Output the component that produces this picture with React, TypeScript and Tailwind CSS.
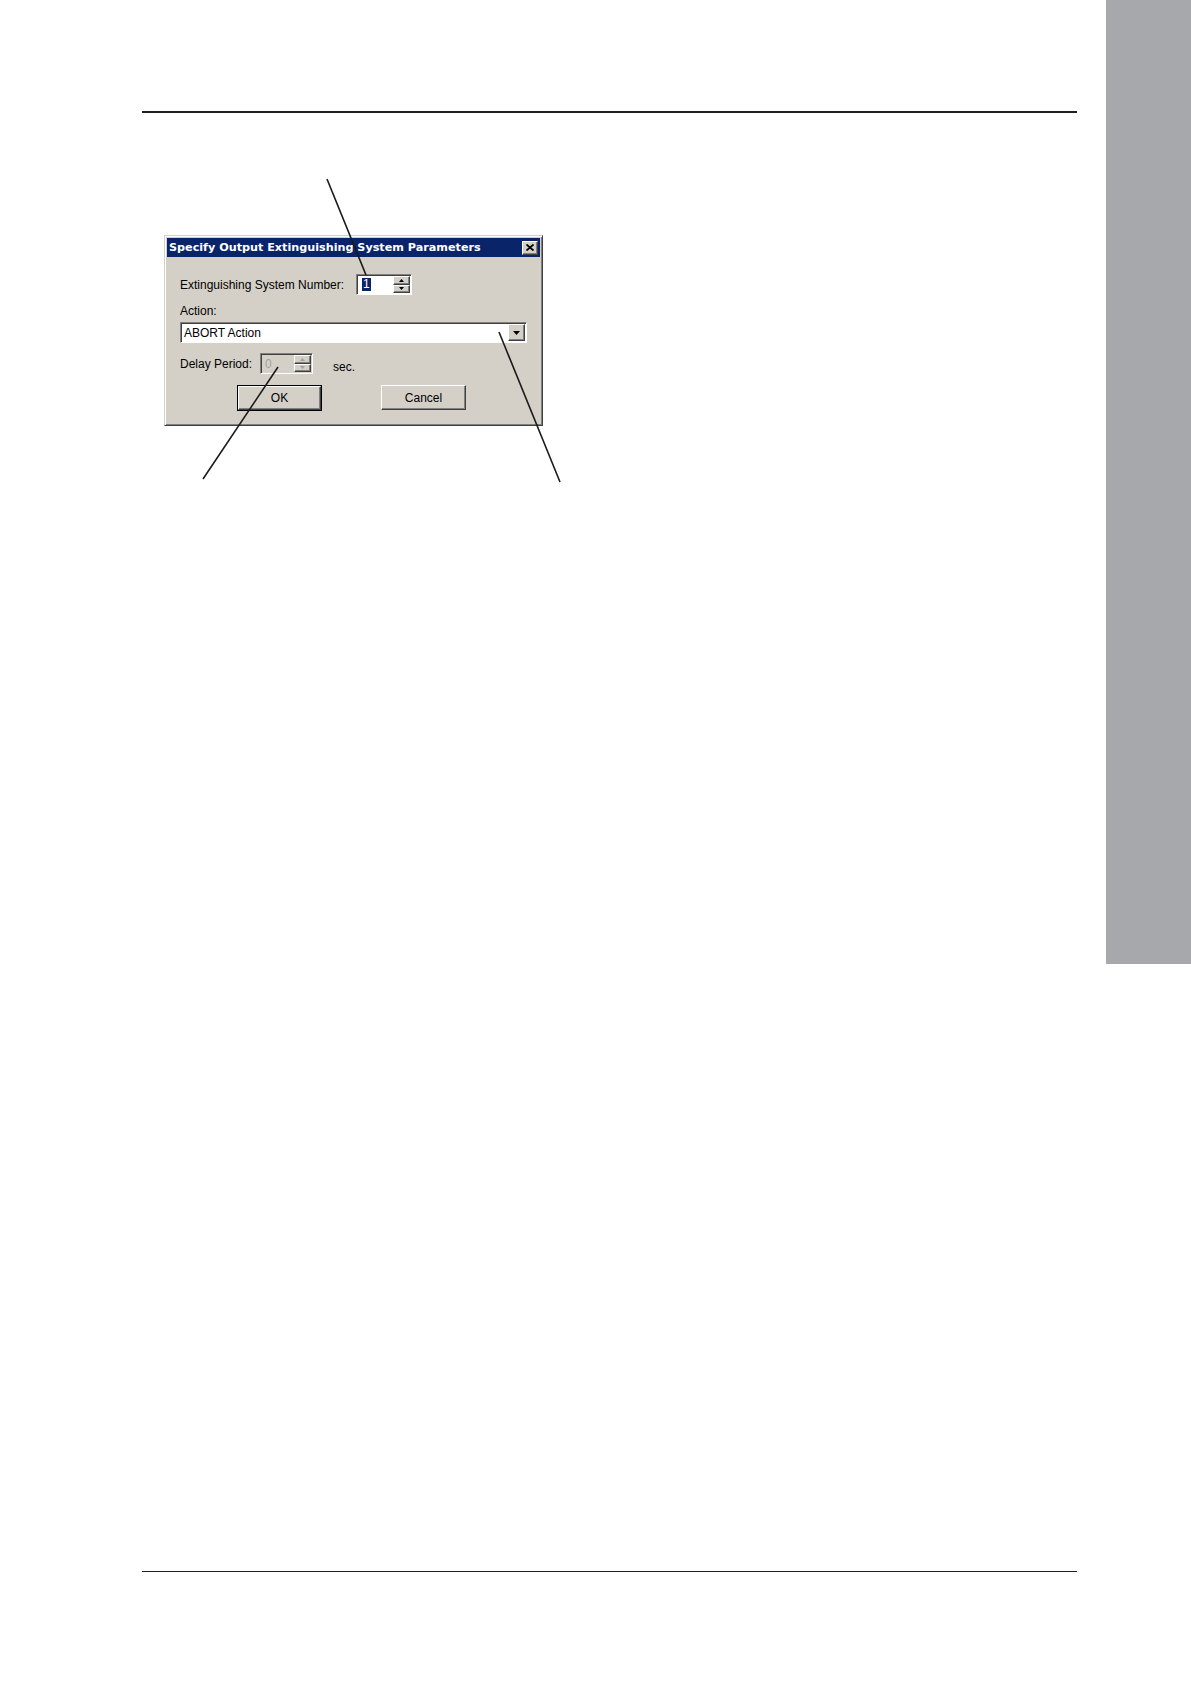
import React from "react";

const raised =
  "border border-t-[#ffffff] border-l-[#ffffff] border-r-[#404040] border-b-[#404040] shadow-[inset_-1px_-1px_0_#808080]";
const sunken =
  "border border-t-[#808080] border-l-[#808080] border-r-[#ffffff] border-b-[#ffffff] shadow-[inset_1px_1px_0_#404040]";

function SpinButtons({ disabled }: { disabled?: boolean }) {
  const c = disabled ? "#a0a0a0" : "#000000";
  return (
    <div className="flex flex-col w-[17px] h-full">
      <div className={`flex-1 bg-[#d4d0c8] ${raised} flex items-center justify-center`}>
        <svg width="5" height="3" viewBox="0 0 5 3">
          <path d="M2.5 0 L5 3 L0 3 Z" fill={c} />
        </svg>
      </div>
      <div className={`flex-1 bg-[#d4d0c8] ${raised} flex items-center justify-center`}>
        <svg width="5" height="3" viewBox="0 0 5 3">
          <path d="M0 0 L5 0 L2.5 3 Z" fill={c} />
        </svg>
      </div>
    </div>
  );
}

export default function App() {
  return (
    <div
      className="relative w-[1191px] h-[1684px] bg-white overflow-hidden flex"
      style={{ fontFamily: '"Liberation Sans", Arial, sans-serif' }}
    >
      <div className="w-[1106px] h-full flex flex-col">
        <div className="mt-[111px] ml-[142px] w-[935px] h-[2px] bg-[#231f20]" />

        {/* Dialog */}
        <div
          className={`mt-[122px] ml-[164px] w-[379px] h-[191px] p-[2px] bg-[#d4d0c8] border border-t-[#d4d0c8] border-l-[#d4d0c8] border-r-[#404040] border-b-[#404040] shadow-[inset_1px_1px_0_#ffffff,inset_-1px_-1px_0_#808080] flex flex-col text-[12px] text-black`}
        >
          <div className="h-[19px] bg-[#0a246a] flex items-center justify-between pl-[2px] pr-[2px]">
            <span
              className="text-white font-bold text-[11.2px] leading-none"
              style={{ fontFamily: '"DejaVu Sans", Verdana, sans-serif' }}
            >
              Specify Output Extinguishing System Parameters
            </span>
            <div className={`w-[16px] h-[14px] bg-[#d4d0c8] ${raised} flex items-center justify-center`}>
              <svg width="8" height="7" viewBox="0 0 8 7">
                <path d="M0.5 0.5 L7.5 6.5 M7.5 0.5 L0.5 6.5" stroke="#000" strokeWidth="1.8" />
              </svg>
            </div>
          </div>

          <div className="pl-[13px] flex flex-col">
            {/* Row 1 */}
            <div className="mt-[17px] flex items-center h-[21px]">
              <span className="w-[176px] leading-none">Extinguishing System Number:</span>
              <div className={`w-[56px] h-[21px] bg-white ${sunken} flex items-stretch p-[1px]`}>
                <div className="flex-1 flex items-center pl-[4px]">
                  <span className="bg-[#0a246a] text-white leading-[13px] px-[1px]">1</span>
                </div>
                <SpinButtons />
              </div>
            </div>

            {/* Action label */}
            <div className="mt-[9px] h-[15px] leading-[15px]">Action:</div>

            {/* Combo */}
            <div className={`mt-[3px] w-[347px] h-[21px] bg-white ${sunken} flex items-stretch p-[1px]`}>
              <div className="flex-1 flex items-center pl-[2px] leading-none">ABORT Action</div>
              <div className={`w-[17px] bg-[#d4d0c8] ${raised} flex items-center justify-center`}>
                <svg width="7" height="4" viewBox="0 0 7 4">
                  <path d="M0 0 L7 0 L3.5 4 Z" fill="#000" />
                </svg>
              </div>
            </div>

            {/* Row 3 */}
            <div className="mt-[10px] flex items-center h-[21px]">
              <span className="w-[80px] leading-none">Delay Period:</span>
              <div className={`w-[53px] h-[21px] bg-[#d4d0c8] ${sunken} flex items-stretch p-[1px]`}>
                <div className="flex-1 flex items-center pl-[3px] text-[#a0a0a0] leading-none">0</div>
                <SpinButtons disabled />
              </div>
              <span className="ml-[20px] mt-[6px] leading-none">sec.</span>
            </div>

            {/* Buttons */}
            <div className="mt-[11px] flex items-start">
              <div className="ml-[57px] w-[85px] h-[26px] border border-black">
                <div className={`w-full h-full bg-[#d4d0c8] ${raised} flex items-center justify-center leading-none`}>
                  OK
                </div>
              </div>
              <div className={`ml-[59px] w-[85px] h-[25px] bg-[#d4d0c8] ${raised} flex items-center justify-center leading-none`}>
                Cancel
              </div>
            </div>
          </div>
        </div>

        <div className="flex-1" />
        <div className="ml-[142px] w-[935px] h-[1.5px] bg-[#231f20]" />
        <div className="h-[112px]" />
      </div>

      <div className="w-[85px] h-[964px] bg-[#a7a8ab]" />

      <svg
        className="absolute left-0 top-0 pointer-events-none"
        width="1191"
        height="1684"
        viewBox="0 0 1191 1684"
      >
        <line x1="327" y1="179" x2="366" y2="275" stroke="#1a1a1a" strokeWidth="1.6" />
        <line x1="278" y1="367" x2="203" y2="479" stroke="#1a1a1a" strokeWidth="1.6" />
        <line x1="499" y1="332" x2="560" y2="482" stroke="#1a1a1a" strokeWidth="1.6" />
      </svg>
    </div>
  );
}
